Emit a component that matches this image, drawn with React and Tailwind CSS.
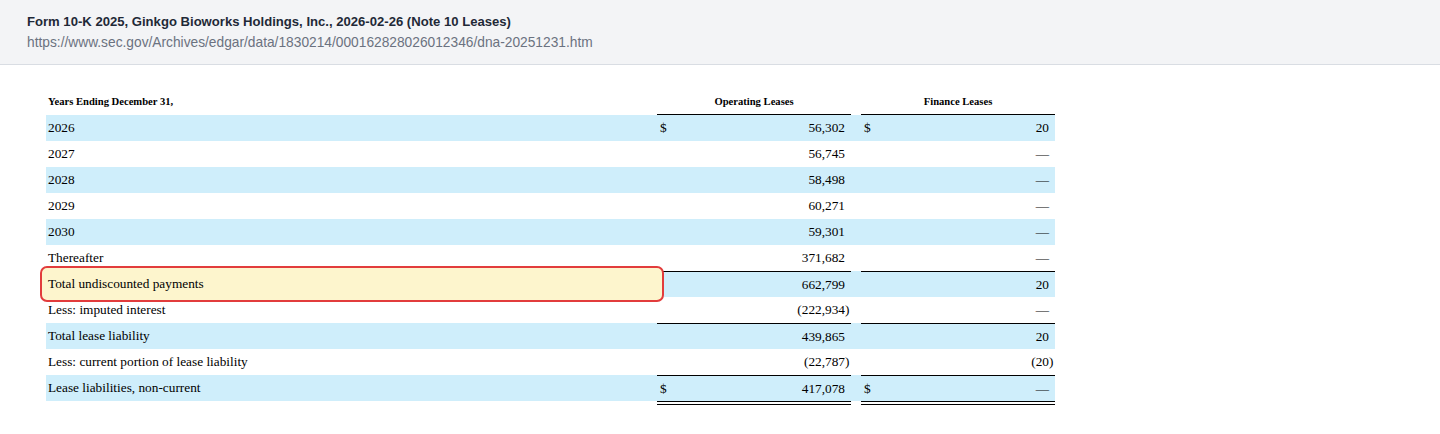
import React from 'react'

const ROWS = [
  { label: '2026', op: '56,302', fin: '20', dollar: true, shade: true },
  { label: '2027', op: '56,745', fin: '—' },
  { label: '2028', op: '58,498', fin: '—', shade: true },
  { label: '2029', op: '60,271', fin: '—' },
  { label: '2030', op: '59,301', fin: '—', shade: true },
  { label: 'Thereafter', op: '371,682', fin: '—' },
  { label: 'Total undiscounted payments', op: '662,799', fin: '20', shade: true, ruled: true, highlight: true },
  { label: 'Less: imputed interest', op: '(222,934)', fin: '—' },
  { label: 'Total lease liability', op: '439,865', fin: '20', shade: true, ruled: true },
  { label: 'Less: current portion of lease liability', op: '(22,787)', fin: '(20)' },
  { label: 'Lease liabilities, non-current', op: '417,078', fin: '—', dollar: true, shade: true, ruled: true }
]

const serif = "font-['Liberation_Serif','Times_New_Roman',serif]"

// numbers in parentheses let the closing paren hang past the column edge
const Amount = ({ value }) => {
  if (value.startsWith('(')) {
    return (
      <span>
        {value.slice(0, -1)}
        <span className="inline-block w-0">)</span>
      </span>
    )
  }
  return <span>{value}</span>
}

const MoneyCell = ({ value, dollar, ruled }) => (
  <div className={`flex items-center justify-between pl-[3px] pr-[6px] h-full ${ruled ? 'border-t border-black' : ''}`}>
    <span>{dollar ? '$' : ''}</span>
    <Amount value={value} />
  </div>
)

const Row = ({ row }) => (
  <div className={`grid grid-cols-[611px_194px_10px_194px] h-[26px] text-[13.3px] text-black ${row.shade ? 'bg-[#cfeefb]' : ''}`}>
    <div className="relative flex items-center pl-[2px]">
      {row.highlight && (
        <div className="absolute -left-[6px] -right-[7px] -top-[5px] -bottom-[5px] rounded-[7px] border-[2.5px] border-[#e23c3c] bg-[#fdf5cd]" />
      )}
      <span className="relative">{row.label}</span>
    </div>
    <MoneyCell value={row.op} dollar={row.dollar} ruled={row.ruled} />
    <div />
    <MoneyCell value={row.fin} dollar={row.dollar} ruled={row.ruled} />
  </div>
)

export default function App() {
  return (
    <div className="min-h-screen bg-white">
      {/* Source header */}
      <div className="h-[65px] bg-[#f3f4f6] border-b border-[#d9dde3] px-[27px] pt-[13px] font-['Liberation_Sans',Arial,sans-serif]">
        <div className="text-[13.1px] font-bold text-[#1f2937] leading-[18px]">
          Form 10-K 2025, Ginkgo Bioworks Holdings, Inc., 2026-02-26 (Note 10 Leases)
        </div>
        <div className="text-[13.75px] text-[#6b7280] leading-[18px] mt-[3px]">
          https://www.sec.gov/Archives/edgar/data/1830214/000162828026012346/dna-20251231.htm
        </div>
      </div>

      {/* Lease maturity table */}
      <div className={`pl-[46px] pt-[24px] ${serif}`}>
        <div className="w-[1009px]">
          <div className="grid grid-cols-[611px_194px_10px_194px] h-[26px] text-[10.6px] font-bold text-black">
            <div className="flex items-center pl-[2px]">Years Ending December 31,</div>
            <div className="flex items-center justify-center border-b border-black">Operating Leases</div>
            <div />
            <div className="flex items-center justify-center border-b border-black">Finance Leases</div>
          </div>
          {ROWS.map((row) => (
            <Row key={row.label} row={row} />
          ))}
          <div className="grid grid-cols-[611px_194px_10px_194px] h-[4px]">
            <div />
            <div className="border-t border-b border-black" />
            <div />
            <div className="border-t border-b border-black" />
          </div>
        </div>
      </div>
    </div>
  )
}
